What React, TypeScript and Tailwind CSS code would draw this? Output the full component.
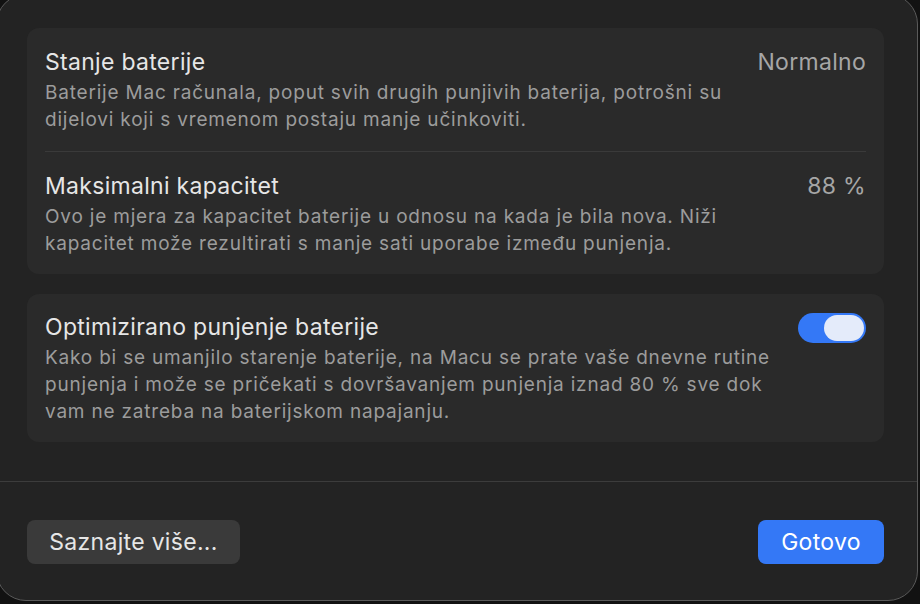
export default function App() {
  return (
    <div
      className="h-[604px] w-[920px] overflow-hidden bg-[#121212]"
      style={{ fontFamily: "Inter, 'Noto Sans', sans-serif" }}
    >
      <div className="-ml-[4px] -mt-[6px] flex h-[607px] w-[922px] flex-col rounded-[30px] border border-[#5a5a5a] bg-[#232323]">
        <div className="flex flex-col gap-[20px] pl-[30px] pr-[33px] pt-[33px]">
          {/* Battery info card */}
          <section className="rounded-[12px] bg-[#2a2a2a] px-[18px]">
            <Row
              title="Stanje baterije"
              value="Normalno"
              lines={[
                "Baterije Mac računala, poput svih drugih punjivih baterija, potrošni su",
                "dijelovi koji s vremenom postaju manje učinkoviti.",
              ]}
              className="pb-[18px] pt-[19px]"
            />
            <div className="h-px bg-[#3a3a3a]" />
            <Row
              title="Maksimalni kapacitet"
              value="88 %"
              lines={[
                "Ovo je mjera za kapacitet baterije u odnosu na kada je bila nova. Niži",
                "kapacitet može rezultirati s manje sati uporabe između punjenja.",
              ]}
              className="pb-[17px] pt-[19px]"
            />
          </section>

          {/* Optimised charging */}
          <section className="rounded-[12px] bg-[#2a2a2a] px-[18px] pb-[17px] pt-[18px]">
            <div className="flex items-start justify-between gap-6">
              <div>
                <h2 className="text-[23px] leading-[30px] tracking-[0.3px] text-[#e6e6e6]">
                  Optimizirano punjenje baterije
                </h2>
                <p className="mt-[2px] whitespace-nowrap text-[19px] leading-[27px] tracking-[0.8px] text-[#9c9c9c]">
                  Kako bi se umanjilo starenje baterije, na Macu se prate vaše dnevne rutine
                  <br />
                  punjenja i može se pričekati s dovršavanjem punjenja iznad 80 % sve dok
                  <br />
                  vam ne zatreba na baterijskom napajanju.
                </p>
              </div>
              <div className="mt-[1px] flex h-[30px] w-[68px] shrink-0 items-center justify-end rounded-full bg-[#3478f6] p-[2px]">
                <div className="h-[26px] w-[40px] rounded-full bg-[#e4ebfa]" />
              </div>
            </div>
          </section>
        </div>

        <div className="mt-[39px] h-px bg-[#3c3c3c]" />

        <div className="flex items-center justify-between pl-[30px] pr-[33px] pt-[38px]">
          <button
            type="button"
            className="h-[44px] w-[213px] rounded-[8px] bg-[#3a3a3a] text-[23px] tracking-[0.3px] text-[#e6e6e6]"
          >
            Saznajte više...
          </button>
          <button
            type="button"
            className="h-[44px] w-[126px] rounded-[8px] bg-[#3478f6] text-[23px] tracking-[0.3px] text-white"
          >
            Gotovo
          </button>
        </div>
      </div>
    </div>
  );
}

function Row({
  title,
  value,
  lines,
  className,
}: {
  title: string;
  value: string;
  lines: string[];
  className: string;
}) {
  return (
    <div className={`flex items-start justify-between gap-6 ${className}`}>
      <div>
        <h2 className="text-[23px] leading-[30px] tracking-[0.3px] text-[#e6e6e6]">{title}</h2>
        <p className="mt-[2px] whitespace-nowrap text-[19px] leading-[27px] tracking-[0.8px] text-[#9c9c9c]">
          {lines[0]}
          <br />
          {lines[1]}
        </p>
      </div>
      <span className="text-[23px] leading-[30px] tracking-[0.3px] text-[#a6a6a6]">{value}</span>
    </div>
  );
}
